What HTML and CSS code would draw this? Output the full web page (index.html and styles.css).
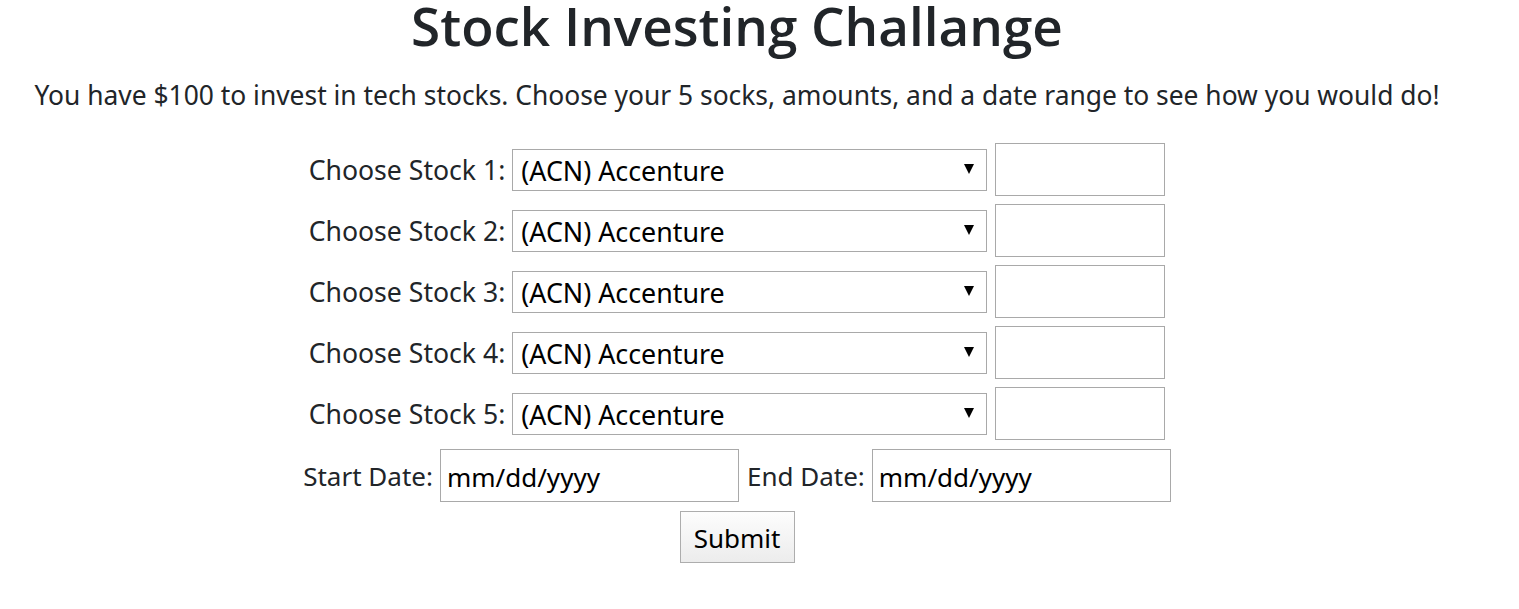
FILE: index.html
```html
<!DOCTYPE html>
<html lang="en">
<head>
<meta charset="utf-8">
<title>Stock Investing Challange</title>
<link rel="stylesheet" href="styles.css">
</head>
<body>
<div class="page">
  <h1 class="title">Stock Investing Challange</h1>
  <p class="intro">You have $100 to invest in tech stocks. Choose your 5 socks, amounts, and a date range to see how you would do!</p>
  <form class="form">
    <div class="row">
      <label class="label">Choose Stock 1:</label>
      <span class="select-wrap"><select class="select"><option>(ACN) Accenture</option></select></span>
      <input class="amount" type="text">
    </div>
    <div class="row">
      <label class="label">Choose Stock 2:</label>
      <span class="select-wrap"><select class="select"><option>(ACN) Accenture</option></select></span>
      <input class="amount" type="text">
    </div>
    <div class="row">
      <label class="label">Choose Stock 3:</label>
      <span class="select-wrap"><select class="select"><option>(ACN) Accenture</option></select></span>
      <input class="amount" type="text">
    </div>
    <div class="row">
      <label class="label">Choose Stock 4:</label>
      <span class="select-wrap"><select class="select"><option>(ACN) Accenture</option></select></span>
      <input class="amount" type="text">
    </div>
    <div class="row">
      <label class="label">Choose Stock 5:</label>
      <span class="select-wrap"><select class="select"><option>(ACN) Accenture</option></select></span>
      <input class="amount" type="text">
    </div>
    <div class="row row-spaced">
      <label class="label label-date">Start Date:</label>
      <input class="date" type="text" placeholder="mm/dd/yyyy">
      <label class="label label-date label-gap">End Date:</label>
      <input class="date" type="text" placeholder="mm/dd/yyyy">
    </div>
    <div class="row row-spaced row-button">
      <button class="submit" type="button">Submit</button>
    </div>
  </form>
</div>
</body>
</html>
```

FILE: styles.css
```css
html, body {
  margin: 0;
  padding: 0;
  background: #fff;
}

body {
  font-family: "Noto Sans", "Open Sans", sans-serif;
  color: #212529;
}

.page {
  width: 1474px;
  text-align: center;
}

.title {
  margin: 0;
  padding-top: 1px;
  font-family: "Open Sans", "Noto Sans", sans-serif;
  font-size: 53px;
  font-weight: 600;
  line-height: 50px;
}

.intro {
  margin: 26px 0 0;
  font-size: 26.4px;
  line-height: 36px;
}

.form {
  margin-top: 30px;
  display: flex;
  flex-direction: column;
  gap: 8px;
}

.row {
  display: flex;
  justify-content: center;
  align-items: center;
  height: 53px;
}

.row-spaced {
  margin-top: 1px;
}

.row-button {
  height: 52px;
}

.label {
  font-size: 26.6px;
  margin-right: 7px;
}

.label-date {
  font-size: 26px;
}

.label-gap {
  margin-left: 8px;
}

.select-wrap {
  position: relative;
  display: inline-block;
  margin-right: 8px;
}

.select-wrap::after {
  content: "";
  position: absolute;
  right: 13px;
  top: 15px;
  border-left: 5px solid transparent;
  border-right: 5px solid transparent;
  border-top: 10px solid #000;
  pointer-events: none;
}

.select {
  -webkit-appearance: none;
  appearance: none;
  box-sizing: border-box;
  width: 475px;
  height: 42px;
  padding: 2px 30px 0 8px;
  border: 1px solid #a9a9a9;
  border-radius: 0;
  background: #fff;
  color: #000;
  font-family: inherit;
  font-size: 26.8px;
}

.amount {
  box-sizing: border-box;
  width: 170px;
  height: 53px;
  border: 1px solid #a9a9a9;
  border-radius: 0;
  background: #fff;
  padding: 0 6px;
  font-family: inherit;
  font-size: 26px;
}

.date {
  box-sizing: border-box;
  width: 299px;
  height: 53px;
  border: 1px solid #a9a9a9;
  border-radius: 0;
  background: #fff;
  padding: 2px 6px 0;
  font-family: inherit;
  font-size: 26px;
  color: #000;
}

.date::placeholder {
  color: #000;
  opacity: 1;
}

.submit {
  box-sizing: border-box;
  width: 115px;
  height: 52px;
  border: 1px solid #adadad;
  border-radius: 0;
  background: linear-gradient(#fdfdfd, #ececec);
  color: #000;
  font-family: inherit;
  font-size: 26px;
  padding: 2px 0 0;
}
```
